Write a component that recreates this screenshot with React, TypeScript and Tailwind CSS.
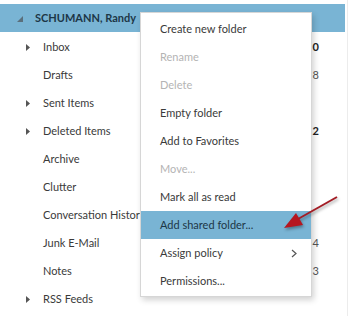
import React from "react";

const folders: { name: string; arrow: boolean; count?: string; bold?: boolean }[] = [
  { name: "Inbox", arrow: true, count: "0", bold: true },
  { name: "Drafts", arrow: false, count: "8" },
  { name: "Sent Items", arrow: true },
  { name: "Deleted Items", arrow: true, count: "2", bold: true },
  { name: "Archive", arrow: false },
  { name: "Clutter", arrow: false },
  { name: "Conversation History", arrow: false },
  { name: "Junk E-Mail", arrow: false, count: "4" },
  { name: "Notes", arrow: false, count: "3" },
  { name: "RSS Feeds", arrow: true },
];

const menu: { label: string; disabled?: boolean; active?: boolean; sub?: boolean }[] = [
  { label: "Create new folder" },
  { label: "Rename", disabled: true },
  { label: "Delete", disabled: true },
  { label: "Empty folder" },
  { label: "Add to Favorites" },
  { label: "Move...", disabled: true },
  { label: "Mark all as read" },
  { label: "Add shared folder...", active: true },
  { label: "Assign policy", sub: true },
  { label: "Permissions..." },
];

export default function App() {
  return (
    <div
      className="relative w-[356px] h-[316px] bg-white overflow-hidden text-[11px] text-[#3a3a3a]"
      style={{ fontFamily: '"Segoe UI", Lato, "Open Sans", sans-serif' }}
    >
      <div className="w-[348px] h-full border-r border-[#ececec] pt-[4px]">
        <div className="h-[28px] w-[345px] bg-[#79b4d4] flex items-center">
          <svg width="6" height="6" viewBox="0 0 6 6" className="ml-[17px] mt-[2px]">
            <polygon points="6,0 6,6 0,6" fill="#5a6f7c" />
          </svg>
          <span className="ml-[12px] font-bold text-[#1d3747] text-[11px]">SCHUMANN, Randy</span>
        </div>
        <div className="pt-[1px]">
          {folders.map((f) => (
            <div key={f.name} className="h-[28px] flex items-center">
              <div className="w-[43px] flex justify-end pr-[13px]">
                {f.arrow && (
                  <svg width="4" height="7" viewBox="0 0 4 7">
                    <polygon points="0,0 4,3.5 0,7" fill="#555555" />
                  </svg>
                )}
              </div>
              <span className="flex-1 whitespace-nowrap">{f.name}</span>
              <span className={`w-[10px] mr-[28px] text-right ${f.bold ? "font-bold text-[#222]" : "text-[#555]"}`}>
                {f.count ?? ""}
              </span>
            </div>
          ))}
        </div>
      </div>

      <div className="absolute left-[140px] top-[12px] w-[172px] h-[285px] bg-white border border-[#d6d6d6] shadow-[2px_3px_6px_rgba(0,0,0,0.18)] pt-[2px]">
        {menu.map((m) => (
          <div
            key={m.label}
            className={`h-[28px] flex items-center pl-[19px] pr-[14px] ${m.active ? "bg-[#79b4d4] text-[#1d3747]" : ""} ${m.disabled ? "text-[#b4b4b4]" : ""}`}
          >
            <span className="flex-1 whitespace-nowrap">{m.label}</span>
            {m.sub && (
              <svg width="6" height="9" viewBox="0 0 6 9">
                <polyline points="1,1 5,4.5 1,8" fill="none" stroke="#555" strokeWidth="1.2" />
              </svg>
            )}
          </div>
        ))}
      </div>

      <svg
        className="absolute left-0 top-0"
        width="356"
        height="316"
        viewBox="0 0 356 316"
        style={{ filter: "drop-shadow(1px 2px 1.5px rgba(0,0,0,0.35))" }}
      >
        <line x1="337" y1="197" x2="298" y2="219" stroke="#a31d25" strokeWidth="2" />
        <polygon points="284,228 303,225 296,213" fill="#b5161f" />
      </svg>
    </div>
  );
}
